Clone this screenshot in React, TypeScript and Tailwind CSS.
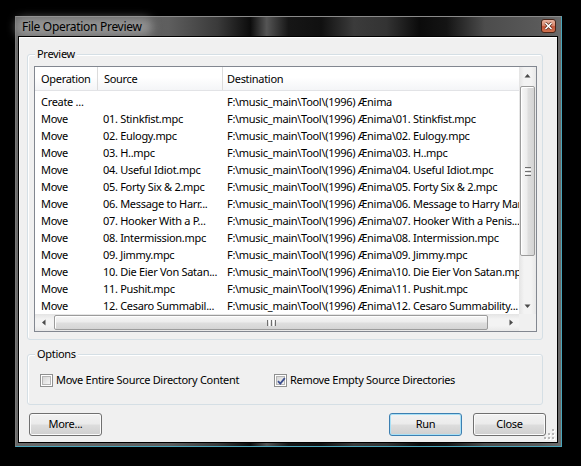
import React from "react";

const P = "F:\\music_main\\Tool\\(1996) Ænima";
const rows: [string, string, string][] = [
  ["Create ...", "", P],
  ["Move", "01. Stinkfist.mpc", P + "\\01. Stinkfist.mpc"],
  ["Move", "02. Eulogy.mpc", P + "\\02. Eulogy.mpc"],
  ["Move", "03. H..mpc", P + "\\03. H..mpc"],
  ["Move", "04. Useful Idiot.mpc", P + "\\04. Useful Idiot.mpc"],
  ["Move", "05. Forty Six & 2.mpc", P + "\\05. Forty Six & 2.mpc"],
  ["Move", "06. Message to Harr...", P + "\\06. Message to Harry Manson.mpc"],
  ["Move", "07. Hooker With a P...", P + "\\07. Hooker With a Penis..."],
  ["Move", "08. Intermission.mpc", P + "\\08. Intermission.mpc"],
  ["Move", "09. Jimmy.mpc", P + "\\09. Jimmy.mpc"],
  ["Move", "10. Die Eier Von Satan...", P + "\\10. Die Eier Von Satan.mpc"],
  ["Move", "11. Pushit.mpc", P + "\\11. Pushit.mpc"],
  ["Move", "12. Cesaro Summabil...", P + "\\12. Cesaro Summability..."],
];

function Arrow({ dir }: { dir: "up" | "down" | "left" | "right" }) {
  const d =
    dir === "up"
      ? "M0.5 4.5 L3.5 1 L6.5 4.5Z"
      : dir === "down"
      ? "M0.5 1.5 L3.5 5 L6.5 1.5Z"
      : dir === "left"
      ? "M4.5 0.5 L1 3.5 L4.5 6.5Z"
      : "M1.5 0.5 L5 3.5 L1.5 6.5Z";
  const w = dir === "up" || dir === "down" ? 7 : 6;
  const h = dir === "up" || dir === "down" ? 6 : 7;
  return (
    <svg width={w} height={h} viewBox={`0 0 ${w} ${h}`}>
      <path d={d} fill="#4a4a4a" />
    </svg>
  );
}

function Checkbox({ checked }: { checked?: boolean }) {
  return (
    <div className="w-[13px] h-[13px] border border-[#8e8f8f] bg-white p-[1px] shrink-0">
      <div className="w-full h-full border border-[#b5b5b5] bg-[linear-gradient(135deg,#d6d6d6,#f5f5f5)] relative">
        {checked && (
          <svg width="11" height="11" viewBox="0 0 11 11" className="absolute -left-[1px] -top-[1px]">
            <path d="M2 5.2 L4.3 7.6 L8.8 2.2" stroke="#3c4f8f" strokeWidth="1.8" fill="none" />
          </svg>
        )}
      </div>
    </div>
  );
}

function Button({ label, def }: { label: string; def?: boolean }) {
  return (
    <div
      className={
        def
          ? "w-[73px] h-[23px] rounded-[3px] border border-[#3c7fb1] shadow-[inset_0_0_0_1px_#a8e0f6] bg-[linear-gradient(180deg,#f2f2f2_0%,#ebebeb_48%,#dddddd_52%,#cfcfcf_100%)] flex items-center justify-center"
          : "w-[73px] h-[23px] rounded-[3px] border border-[#707070] shadow-[inset_0_0_0_1px_#fbfbfb] bg-[linear-gradient(180deg,#f2f2f2_0%,#ebebeb_48%,#dddddd_52%,#cfcfcf_100%)] flex items-center justify-center"
      }
    >
      <span className="pb-[1px]">{label}</span>
    </div>
  );
}

export default function App() {
  return (
    <div className="w-[581px] h-[466px] bg-black pt-[16px] pl-[15px] font-['Noto_Sans',sans-serif] text-[11px] tracking-[-0.3px] text-black leading-[14px]">
      <div className="w-[547px] h-[431px] flex flex-col border-l border-t border-l-[#7a7a7a] border-t-[#8a8a8a] border-r border-b border-r-[#4aa6bb] border-b-[#4aa6bb] bg-[linear-gradient(90deg,#6a6a6a_0%,#5e5e5e_28%,#3a3a3a_37%,#0c0c0c_43%,#555_46%,#161616_50%,#101010_56%,#3b3b3b_62%,#333_68%,#0b0b0b_74%,#141414_79%,#4c4c4c_86%,#5a5a5a_96%,#6c6c6c_100%)]">
        {/* Title bar */}
        <div className="h-[19px] flex items-center justify-between pl-[6px] pr-[5px] shrink-0">
          <div className="relative text-[12px]">
            <div className="absolute -left-[6px] -right-[10px] -top-[2px] -bottom-[2px] rounded-[8px] bg-[#b4b4b4]/60 blur-[5px]" />
            <span className="relative">File Operation Preview</span>
          </div>
          <div className="self-start mt-[2px] w-[15px] h-[14px] rounded-[3px] border border-[#4a2418] bg-[linear-gradient(180deg,#eab3a0_0%,#d98a70_45%,#c5553a_55%,#d0734f_100%)] flex items-center justify-center">
            <svg width="9" height="8" viewBox="0 0 9 8">
              <path d="M1.5 1 L7.5 7 M7.5 1 L1.5 7" stroke="#5a2a1c" strokeWidth="3" />
              <path d="M1.5 1 L7.5 7 M7.5 1 L1.5 7" stroke="#fff" strokeWidth="1.6" />
            </svg>
          </div>
        </div>
        {/* Client */}
        <div className="flex-1 pl-[2px] pr-[3px] pb-[3px] flex">
          <div className="flex-1 border border-black relative">
            <div className="w-full h-full border-t border-l border-white bg-[#f0f0f0] flex flex-col">
              {/* Preview group */}
              <div className="ml-[7px] mt-[16px] w-[516px] h-[286px] relative rounded-[3px] border border-[#d5dfe5] shadow-[inset_1px_1px_0_#fff] pl-[6px] pt-[11px] shrink-0">
                <span className="absolute left-[7px] -top-[8px] px-[2px] bg-[#f0f0f0]">Preview</span>
                <div className="w-[503px] h-[266px] border border-[#828790] bg-white grid grid-cols-[484px_17px] grid-rows-[247px_17px]">
                  {/* list pane */}
                  <div className="overflow-hidden flex flex-col">
                    <div className="h-[24px] flex bg-[linear-gradient(180deg,#ffffff_0%,#ffffff_45%,#f4f5f7_100%)] border-b border-[#e2e3e6] shrink-0">
                      <div className="w-[63px] border-r border-[#dcdcdc] pl-[6px] flex items-center pt-[1px]">Operation</div>
                      <div className="w-[125px] border-r border-[#dcdcdc] pl-[6px] flex items-center pt-[1px]">Source</div>
                      <div className="flex-1 pl-[4px] flex items-center pt-[1px]">Destination</div>
                    </div>
                    <div className="pt-[2px] flex flex-col">
                      {rows.map((r, i) => (
                        <div key={i} className="h-[17px] flex items-center whitespace-nowrap">
                          <div className="w-[63px] pl-[6px] overflow-hidden">{r[0]}</div>
                          <div className="w-[125px] pl-[5px] overflow-hidden">{r[1]}</div>
                          <div className="flex-1 min-w-0 pl-[4px] overflow-hidden">{r[2]}</div>
                        </div>
                      ))}
                    </div>
                  </div>
                  {/* vertical scrollbar */}
                  <div className="flex flex-col bg-[linear-gradient(90deg,#e4e4e4_0%,#f3f3f3_30%,#f3f3f3_70%,#e8e8e8_100%)]">
                    <div className="h-[17px] flex items-center justify-center">
                      <Arrow dir="up" />
                    </div>
                    <div className="mx-[1px] mt-[2px] h-[170px] rounded-[2px] border border-[#9b9b9b] bg-[linear-gradient(90deg,#f7f7f7_0%,#ececec_45%,#dedede_55%,#d4d4d4_100%)] shadow-[inset_1px_1px_0_#ffffff] flex flex-col items-center justify-center gap-[1px]">
                      <div className="w-[6px] h-[1px] bg-[#6f6f6f]" />
                      <div className="w-[6px] h-[1px] bg-[#ffffff]" />
                      <div className="w-[6px] h-[1px] bg-[#6f6f6f]" />
                      <div className="w-[6px] h-[1px] bg-[#ffffff]" />
                      <div className="w-[6px] h-[1px] bg-[#6f6f6f]" />
                    </div>
                    <div className="flex-1" />
                    <div className="h-[17px] flex items-center justify-center">
                      <Arrow dir="down" />
                    </div>
                  </div>
                  {/* horizontal scrollbar */}
                  <div className="flex bg-[linear-gradient(180deg,#e4e4e4_0%,#f3f3f3_30%,#f3f3f3_70%,#e8e8e8_100%)]">
                    <div className="w-[17px] flex items-center justify-center">
                      <Arrow dir="left" />
                    </div>
                    <div className="my-[1px] ml-[2px] w-[434px] rounded-[2px] border border-[#9b9b9b] bg-[linear-gradient(180deg,#f7f7f7_0%,#ececec_45%,#dedede_55%,#d4d4d4_100%)] shadow-[inset_1px_1px_0_#ffffff] flex items-center justify-center gap-[1px]">
                      <div className="w-[1px] h-[6px] bg-[#6f6f6f]" />
                      <div className="w-[1px] h-[6px] bg-[#ffffff]" />
                      <div className="w-[1px] h-[6px] bg-[#6f6f6f]" />
                      <div className="w-[1px] h-[6px] bg-[#ffffff]" />
                      <div className="w-[1px] h-[6px] bg-[#6f6f6f]" />
                    </div>
                    <div className="flex-1" />
                    <div className="w-[17px] flex items-center justify-center">
                      <Arrow dir="right" />
                    </div>
                  </div>
                  <div className="bg-[#f0f0f0]" />
                </div>
              </div>
              {/* Options group */}
              <div className="ml-[7px] mt-[14px] w-[516px] h-[51px] relative rounded-[3px] border border-[#d5dfe5] shadow-[inset_1px_1px_0_#fff] pl-[12px] pt-[19px] flex items-start shrink-0">
                <span className="absolute left-[7px] -top-[8px] px-[2px] bg-[#f0f0f0]">Options</span>
                <div className="w-[234px] flex items-center gap-[3px]">
                  <Checkbox />
                  <span className="-mt-[1px]">Move Entire Source Directory Content</span>
                </div>
                <div className="flex items-center gap-[3px]">
                  <Checkbox checked />
                  <span className="-mt-[1px]">Remove Empty Source Directories</span>
                </div>
              </div>
              {/* Buttons */}
              <div className="mt-[8px] ml-[9px] mr-[11px] flex items-center shrink-0">
                <Button label="More..." />
                <div className="flex-1" />
                <div className="flex gap-[11px]">
                  <Button label="Run" def />
                  <Button label="Close" />
                </div>
              </div>
            </div>
            {/* size grip */}
            <svg width="11" height="11" viewBox="0 0 11 11" className="absolute right-[2px] bottom-[2px]">
              {[
                [8, 0],
                [8, 4],
                [4, 4],
                [8, 8],
                [4, 8],
                [0, 8],
              ].map(([x, y], i) => (
                <g key={i}>
                  <rect x={x + 1} y={y + 1} width="2" height="2" fill="#ffffff" />
                  <rect x={x} y={y} width="2" height="2" fill="#b8b8b8" />
                </g>
              ))}
            </svg>
          </div>
        </div>
      </div>
    </div>
  );
}
